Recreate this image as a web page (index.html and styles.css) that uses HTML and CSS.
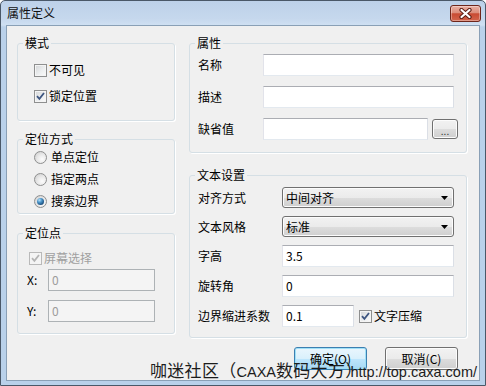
FILE: index.html
```html
<!DOCTYPE html>
<html lang="zh-CN">
<head>
<meta charset="utf-8">
<title>属性定义</title>
<link rel="stylesheet" href="styles.css">
</head>
<body>
<div class="window">
  <div class="titlebar">
    <span class="title">属性定义</span>
    <span class="close">
      <svg width="13" height="11" viewBox="0 0 13 11">
        <path d="M2.5 2 L10.5 9 M10.5 2 L2.5 9" stroke="#5b1d14" stroke-width="4.2" stroke-linecap="round" fill="none"/>
        <path d="M2.5 2 L10.5 9 M10.5 2 L2.5 9" stroke="#ffffff" stroke-width="2.2" stroke-linecap="round" fill="none"/>
      </svg>
    </span>
  </div>
  <div class="client">
    <div class="columns">
      <div class="col-left">
        <fieldset class="group g-mode">
          <legend>模式</legend>
          <div class="gbody">
            <div class="check"><span class="box"></span><span>不可见</span></div>
            <div class="check"><span class="box"><svg class="tick" width="9" height="9" viewBox="0 0 9 9"><path d="M1 4.2 L3.4 6.8 L8 1" stroke="#3d5580" stroke-width="1.8" fill="none"/></svg></span><span>锁定位置</span></div>
          </div>
        </fieldset>
        <fieldset class="group g-locate">
          <legend>定位方式</legend>
          <div class="gbody">
            <div class="radio"><span class="dot"></span><span>单点定位</span></div>
            <div class="radio"><span class="dot"></span><span>指定两点</span></div>
            <div class="radio"><span class="dot on"></span><span>搜索边界</span></div>
          </div>
        </fieldset>
        <fieldset class="group g-point">
          <legend>定位点</legend>
          <div class="gbody">
            <div class="check disabled"><span class="box"><svg class="tick" width="9" height="9" viewBox="0 0 9 9"><path d="M1 4.2 L3.4 6.8 L8 1" stroke="#b4b4b4" stroke-width="1.8" fill="none"/></svg></span><span>屏幕选择</span></div>
            <div class="coord"><span class="clabel">X:</span><span class="input off">0</span></div>
            <div class="coord"><span class="clabel">Y:</span><span class="input off">0</span></div>
          </div>
        </fieldset>
      </div>
      <div class="col-right">
        <fieldset class="group g-attr">
          <legend>属性</legend>
          <div class="gbody">
            <div class="frow"><span class="flabel">名称</span><span class="input"></span></div>
            <div class="frow"><span class="flabel">描述</span><span class="input"></span></div>
            <div class="frow wide"><span class="flabel">缺省值</span><span class="input grow"></span><span class="btn small">...</span></div>
          </div>
        </fieldset>
        <fieldset class="group g-text">
          <legend>文本设置</legend>
          <div class="gbody">
            <div class="trow"><span class="tlabel">对齐方式</span><span class="select"><span>中间对齐</span><svg width="7" height="4" viewBox="0 0 7 4"><path d="M0 0 H7 L3.5 4 Z" fill="#000"/></svg></span></div>
            <div class="trow"><span class="tlabel">文本风格</span><span class="select"><span>标准</span><svg width="7" height="4" viewBox="0 0 7 4"><path d="M0 0 H7 L3.5 4 Z" fill="#000"/></svg></span></div>
            <div class="trow"><span class="tlabel">字高</span><span class="input">3.5</span></div>
            <div class="trow"><span class="tlabel">旋转角</span><span class="input">0</span></div>
            <div class="trow"><span class="tlabel">边界缩进系数</span><span class="input short">0.1</span><span class="check inline"><span class="box"><svg class="tick" width="9" height="9" viewBox="0 0 9 9"><path d="M1 4.2 L3.4 6.8 L8 1" stroke="#3d5580" stroke-width="1.8" fill="none"/></svg></span><span>文字压缩</span></span></div>
          </div>
        </fieldset>
      </div>
    </div>
    <div class="buttons">
      <span class="btn default">确定(O)</span>
      <span class="btn">取消(C)</span>
    </div>
  </div>
  <div class="watermark"><span class="cjk">咖迷社区（</span><span class="lat">CAXA</span><span class="cjk">数码大方）</span><span class="lat url">http://top.caxa.com/</span></div>
</div>
</body>
</html>
```

FILE: styles.css
```css
* { box-sizing: border-box; }
html, body { margin: 0; padding: 0; background: #ffffff; }
body {
  font-family: "Noto Sans CJK SC", "Noto Sans", sans-serif;
  font-size: 12px;
  line-height: 16px;
  color: #000;
}

.window {
  position: relative;
  width: 486px;
  height: 386px;
  display: flex;
  flex-direction: column;
  border: 1px solid #4a5868;
  border-radius: 5px 5px 0 0;
  background: linear-gradient(#bdd1e9 0px, #c6d8ed 18px, #cfe0f2 24px, #bad1ea 26px, #b9d1ea 100%);
  padding: 0 5px 4px 5px;
}

.titlebar {
  height: 24px;
  display: flex;
  align-items: center;
  justify-content: space-between;
  padding-left: 1px;
}
.title { font-size: 12px; line-height: 14px; color: #111; }
.close {
  align-self: flex-start;
  margin-top: 4px;
  margin-right: -1px;
  width: 31px;
  height: 17px;
  border: 1px solid #6e261b;
  border-radius: 3px;
  background: linear-gradient(#eab0a3 0%, #dc8d7b 45%, #c94b33 52%, #d2654d 100%);
  box-shadow: inset 0 0 0 1px rgba(255,255,255,0.35);
  display: flex;
  align-items: center;
  justify-content: center;
}

.client {
  flex: 1;
  background: #f0f0f0;
  border: 1px solid #8aa0b6;
  padding: 10px 0 0 10px;
  display: flex;
  flex-direction: column;
}

.columns { display: flex; gap: 14px; }
.col-left { width: 158px; flex: none; display: flex; flex-direction: column; gap: 11px; }
.col-right { width: 278px; flex: none; display: flex; flex-direction: column; gap: 15px; }
.g-point { margin-top: 1px !important; }

.group {
  margin: 0;
  min-width: 0;
  border: 1px solid #d5dfe5;
  border-radius: 3px;
  padding: 0;
  box-shadow: 1px 1px 0 #ffffff;
}
.group legend {
  padding: 0 2px;
  margin-left: 5px;
  line-height: 14px;
  height: 14px;
}
.gbody { display: flex; flex-direction: column; }

/* mode */
.g-mode .gbody { padding: 12px 0 16px 16px; gap: 10px; }
.check { display: flex; align-items: center; height: 16px; gap: 2px; }
.box {
  width: 13px;
  height: 13px;
  flex: none;
  border: 1px solid #8e8f8f;
  background: linear-gradient(135deg, #d2d4d6 0%, #eceeef 55%, #fbfbfb 100%);
  box-shadow: inset 0 0 0 1px #f4f4f4;
  display: flex;
  align-items: center;
  justify-content: center;
}
.check.disabled { color: #a0a0a0; }
.check.disabled .box { border-color: #b9b9b9; background: #f4f4f4; }

/* locate */
.g-locate .gbody { padding: 3px 0 4px 16px; gap: 6px; }
.radio { display: flex; align-items: center; height: 16px; gap: 4px; }
.dot {
  width: 13px;
  height: 13px;
  flex: none;
  border-radius: 50%;
  border: 1px solid #8e8f8f;
  background: radial-gradient(circle at 65% 65%, #fcfcfc 0%, #e9e9e9 45%, #c9c9c9 100%);
  display: flex;
  align-items: center;
  justify-content: center;
}
.dot.on::after {
  content: "";
  width: 7px;
  height: 7px;
  border-radius: 50%;
  background: radial-gradient(circle at 35% 30%, #b7e2fb 0%, #4b95c9 35%, #1b4d7c 75%, #14385d 100%);
}

/* point */
.g-point .gbody { padding: 10px 0 11px 11px; }
.g-point .check { margin-bottom: 3px; }
.coord { display: flex; align-items: center; height: 22px; margin-left: -2px; }
.coord + .coord { margin-top: 9px; }
.clabel { width: 21px; }

.input {
  height: 22px;
  background: #fff;
  border: 1px solid;
  border-color: #abadb3 #dbdfe6 #e3e9ef #e2e3ea;
  padding: 0 3px;
  display: flex;
  align-items: center;
  font-size: 12px;
}
.input.off {
  width: 107px;
  background: #f4f4f4;
  border-color: #adb2b5;
  color: #9c9c9c;
}

/* attributes */
.g-attr .gbody { padding: 4px 12px 12px 8px; gap: 10px; }
.frow { display: flex; align-items: center; height: 22px; }
.flabel { width: 65px; flex: none; }
.frow .input { flex: 1; }
.frow.wide { gap: 4px; margin-right: -4px; }
.frow.wide .flabel { margin-right: -4px; }

.btn {
  display: flex;
  align-items: center;
  justify-content: center;
  border: 1px solid #707070;
  border-radius: 3px;
  background: linear-gradient(#f2f2f2 0%, #ebebeb 50%, #dddddd 51%, #cfcfcf 100%);
  box-shadow: inset 0 0 0 1px #fcfcfc;
}
.btn.small {
  width: 26px;
  height: 20px;
  flex: none;
  font-size: 10px;
  line-height: 10px;
  padding-top: 4px;
  color: #333;
}

/* text settings */
.g-text .gbody { padding: 5px 12px 10px 8px; gap: 8px; }
.trow { display: flex; align-items: center; }
.tlabel { width: 84px; flex: none; }
.trow .input { flex: 1; }
.trow .input.short { flex: none; width: 72px; }
.select {
  flex: 1;
  height: 21px;
  display: flex;
  align-items: center;
  justify-content: space-between;
  padding: 0 5px 0 3px;
  border: 1px solid #707070;
  border-radius: 3px;
  background: linear-gradient(#f2f2f2 0%, #ebebeb 50%, #dddddd 51%, #cfcfcf 100%);
  box-shadow: inset 0 0 0 1px #fcfcfc;
}
.check.inline { margin-left: 5px; }

/* buttons */
.buttons {
  display: flex;
  justify-content: flex-end;
  gap: 18px;
  margin-top: 9px;
  padding-right: 21px;
}
.buttons .btn { width: 73px; height: 23px; }
.btn.default {
  border-color: #3c7fb1;
  box-shadow: inset 0 0 0 1px #9fe0f7;
  background: linear-gradient(#eaf6fd 0%, #d9f0fc 50%, #bee6fd 51%, #a7d9f5 100%);
}

/* watermark overlay */
.watermark {
  position: absolute;
  left: 149px;
  top: 360px;
  display: flex;
  align-items: baseline;
  color: #1c1c1c;
  white-space: nowrap;
}
.watermark .cjk { font-family: "Noto Sans CJK SC", sans-serif; font-size: 17px; line-height: 18px; letter-spacing: 0.3px; }
.watermark .lat { font-family: "Liberation Sans", Arial, sans-serif; font-size: 14.5px; line-height: 18px; }
.watermark .url { margin-left: -12px; }
```
